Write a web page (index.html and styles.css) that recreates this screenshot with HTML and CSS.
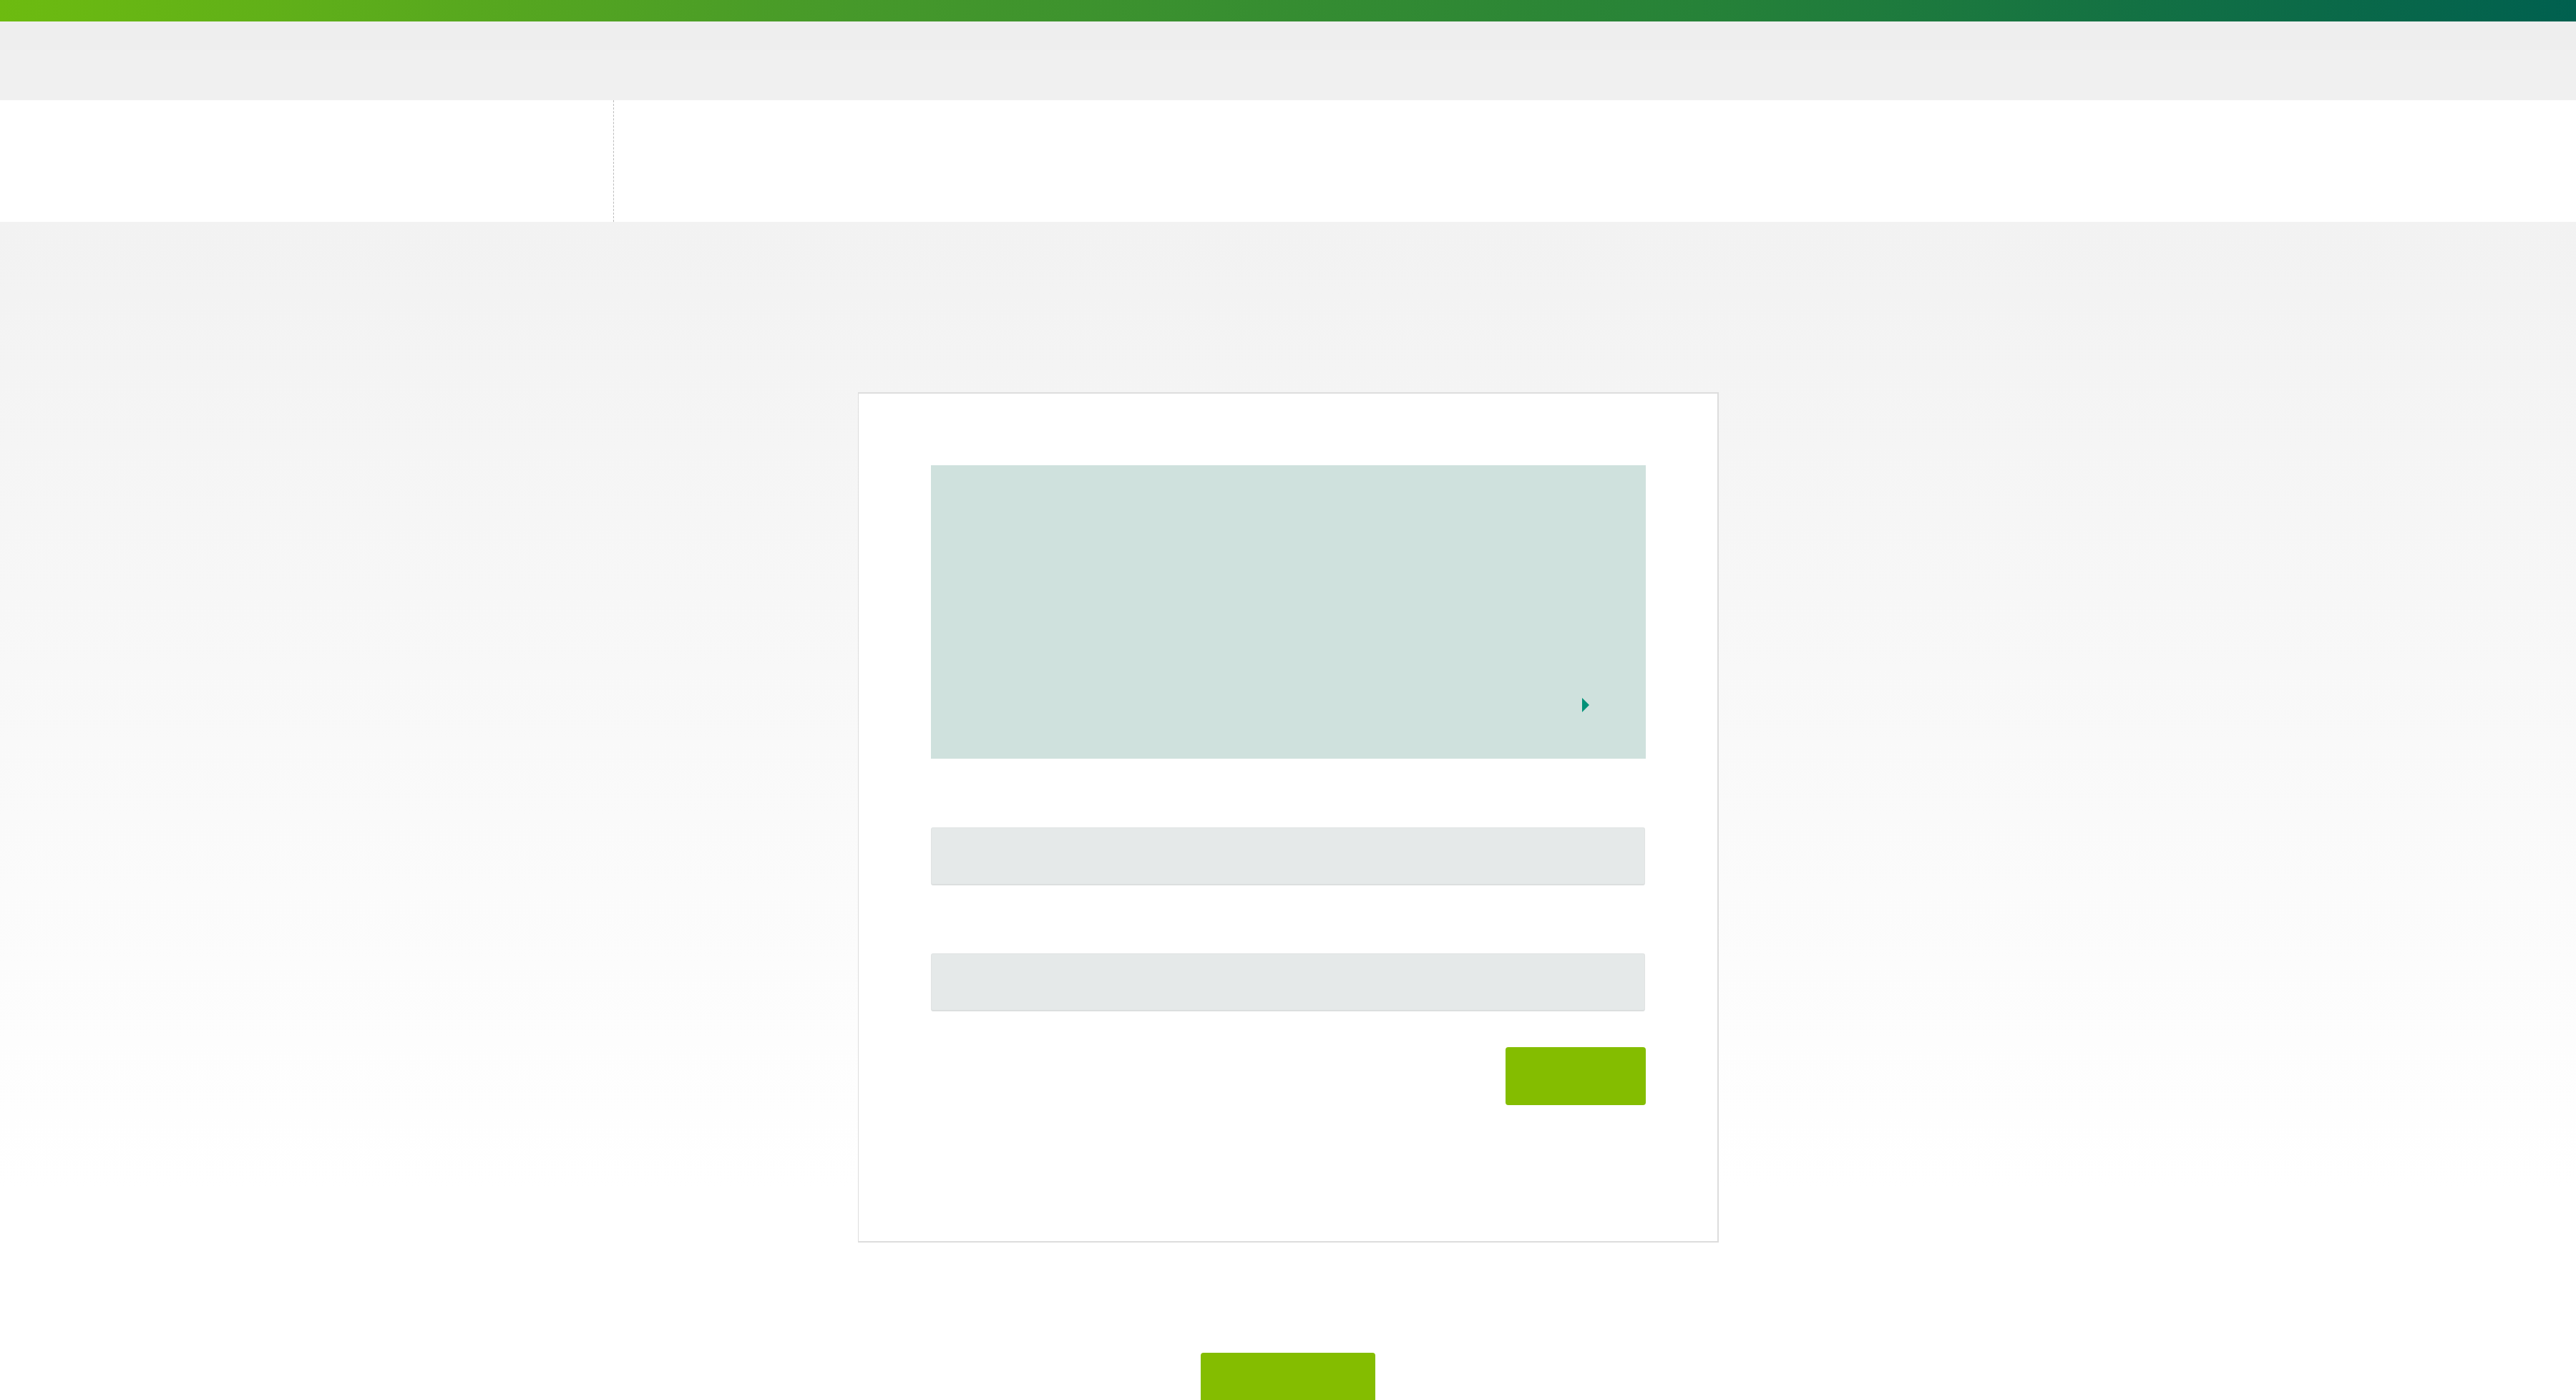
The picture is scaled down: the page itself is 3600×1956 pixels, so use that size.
FILE: index.html
```html
<!DOCTYPE html>
<html lang="en">
<head>
<meta charset="utf-8">
<title>Sign in</title>
<link rel="stylesheet" href="styles.css">
</head>
<body>
<div class="brand-bar"></div>
<div class="utility-bar"></div>
<div class="sub-bar"></div>
<header class="site-header">
  <div class="header-left"></div>
  <div class="header-right"></div>
</header>
<main class="main">
  <section class="card">
    <div class="notice">
      <div class="notice-body"></div>
      <div class="notice-link"><span class="caret"></span></div>
    </div>
    <form class="form">
      <input class="field" type="text" aria-label="Username">
      <input class="field" type="password" aria-label="Password">
      <div class="actions"><button class="btn btn-submit" type="button"></button></div>
      <div class="form-footer"></div>
    </form>
  </section>
  <div class="bottom-actions"><button class="btn btn-wide" type="button"></button></div>
</main>
</body>
</html>
```
FILE: styles.css
```css
html, body {
  margin: 0;
  padding: 0;
}
body {
  font-family: "Liberation Sans", Arial, sans-serif;
  background: #ffffff;
  overflow: hidden;
}
.brand-bar {
  height: 30px;
  background: linear-gradient(to right, #6dbb10 0%, #46992a 33%, #268238 66%, #00604f 100%);
}
.utility-bar {
  height: 40px;
  background: #eeeeee;
}
.sub-bar {
  height: 70px;
  background: #f0f0f0;
}
.site-header {
  display: flex;
  height: 170px;
  background: #ffffff;
}
.header-left {
  width: 857px;
  border-right: 1px dashed #bcbcbc;
}
.header-right {
  flex: 1;
}
.main {
  background: linear-gradient(to bottom, #f2f2f2 0px, #ffffff 1350px) no-repeat;
  background-color: #ffffff;
  padding-top: 238px;
  display: flex;
  flex-direction: column;
  align-items: center;
}
.card {
  box-sizing: border-box;
  width: 1203px;
  height: 1188px;
  background: #ffffff;
  border: 2px solid #dddddd;
  border-left-width: 1px;
  border-right-width: 2px;
  padding: 100px 100px 0 101px;
}
.notice {
  box-sizing: border-box;
  height: 410px;
  background: #cfe1dd;
  display: flex;
  flex-direction: column;
  padding-bottom: 65px;
}
.notice-body {
  flex: 1;
}
.notice-link {
  display: flex;
  justify-content: flex-end;
  padding-right: 79px;
}
.caret {
  width: 0;
  height: 0;
  border-top: 10px solid transparent;
  border-bottom: 10px solid transparent;
  border-left: 10px solid #009178;
}
.form {
  display: flex;
  flex-direction: column;
  padding-top: 96px;
}
.field {
  box-sizing: border-box;
  width: 998px;
  height: 81px;
  margin: 0;
  padding: 0 20px;
  background: #e5e9e9;
  border: 1px solid #e0e3e3;
  border-bottom: 2px solid #dcdfdf;
  border-radius: 3px;
  outline: none;
  font: inherit;
}
.field + .field {
  margin-top: 95px;
}
.actions {
  display: flex;
  justify-content: flex-end;
  padding-top: 50px;
}
.btn {
  border: none;
  margin: 0;
  padding: 0;
  background: #84bd00;
  border-radius: 4px;
  height: 81px;
  cursor: pointer;
}
.btn-submit {
  width: 196px;
}
.bottom-actions {
  padding-top: 154px;
  display: flex;
  justify-content: center;
  padding-bottom: 40px;
}
.btn-wide {
  width: 244px;
}
```
